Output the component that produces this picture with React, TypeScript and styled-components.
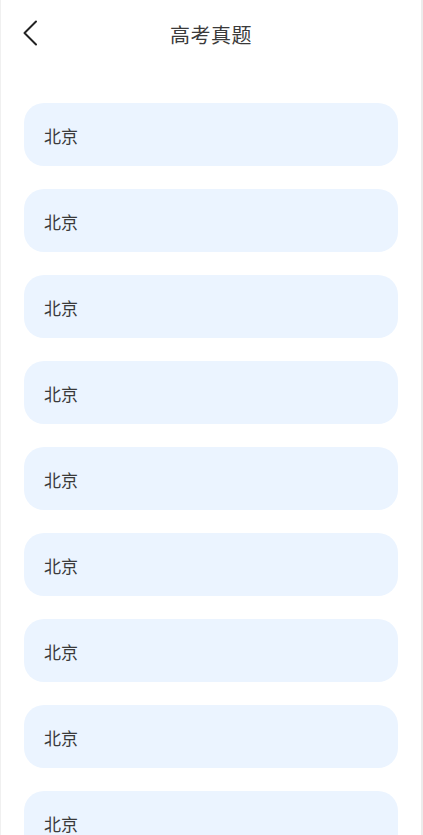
import styled, { createGlobalStyle } from "styled-components";

const GlobalStyle = createGlobalStyle`
  html, body {
    margin: 0;
    padding: 0;
    background: #ffffff;
  }
  body {
    font-family: "Noto Sans CJK SC", "Noto Sans", sans-serif;
  }
`;

const Page = styled.div`
  box-sizing: border-box;
  width: 423px;
  height: 835px;
  overflow: hidden;
  border-left: 1px solid #f0f0f0;
  border-right: 2px solid #ececec;
  background: #ffffff;
`;

const Header = styled.div`
  position: relative;
  height: 68px;
  display: flex;
  align-items: center;
  justify-content: center;
`;

const BackButton = styled.button`
  position: absolute;
  left: 18px;
  top: 18px;
  width: 22px;
  height: 30px;
  padding: 0;
  border: none;
  background: none;
  display: flex;
  align-items: center;
  justify-content: center;
`;

const Title = styled.h1`
  margin: 0;
  font-size: 20px;
  font-weight: 400;
  color: #3a3a3a;
  letter-spacing: 0.5px;
`;

const List = styled.div`
  display: flex;
  flex-direction: column;
  gap: 23px;
  padding: 35px 23px 0 23px;
`;

const Item = styled.div`
  height: 63px;
  border-radius: 20px;
  background: #ebf4ff;
  display: flex;
  align-items: center;
  padding-left: 20px;
  padding-top: 2px;
  box-sizing: border-box;
  font-size: 17px;
  color: #3a3a3a;
  flex-shrink: 0;
`;

const cities = Array.from({ length: 9 }, () => "北京");

function App() {
  return (
    <>
      <GlobalStyle />
      <Page>
        <Header>
          <BackButton>
            <svg width="16" height="26" viewBox="0 0 16 26" fill="none">
              <path
                d="M14 1.5 L2.5 13 L14 24.5"
                stroke="#222"
                strokeWidth="2"
                strokeLinecap="round"
                strokeLinejoin="round"
              />
            </svg>
          </BackButton>
          <Title>高考真题</Title>
        </Header>
        <List>
          {cities.map((name, i) => (
            <Item key={i}>{name}</Item>
          ))}
        </List>
      </Page>
    </>
  );
}

export default App;
